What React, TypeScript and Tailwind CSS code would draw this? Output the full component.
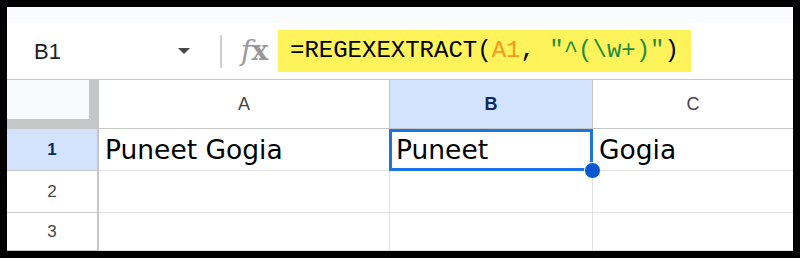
// Spreadsheet formula bar + grid snippet
const ui = "font-['Liberation_Sans',Arial,sans-serif]";
const cellFont = "font-['DejaVu_Sans',Verdana,sans-serif]";

function ColumnHeader({ label, width, active }: { label: string; width?: string; active?: boolean }) {
  return (
    <div
      className={`${width ?? 'flex-1'} border-b border-[#c4c7c5] flex items-center justify-center text-[18px] ${ui} ${
        active ? 'bg-[#d3e3fd] font-bold text-[#0b2a5e]' : 'bg-white text-[#444746]'
      } ${width ? 'border-r' : ''}`}
    >
      {label}
    </div>
  );
}

function RowHeader({ n, active }: { n: number; active?: boolean }) {
  return (
    <div
      className={`w-[92px] shrink-0 border-r-2 border-b border-[#c4c7c5] flex items-center justify-center text-[17px] ${ui} ${
        active ? 'bg-[#d3e3fd] font-bold text-[#0b2a5e]' : 'text-[#444746]'
      }`}
    >
      {n}
    </div>
  );
}

function Row({ n, height, cells, active }: { n: number; height: string; cells: string[]; active?: boolean }) {
  return (
    <div className={`flex ${height}`}>
      <RowHeader n={n} active={active} />
      <div className={`w-[291px] shrink-0 border-r border-b border-[#e1e1e1] flex items-center pl-[6px] text-[26.5px] text-black ${cellFont}`}>
        {cells[0]}
      </div>
      <div className={`relative w-[203px] shrink-0 border-r border-b border-[#e1e1e1] flex items-center pl-[6px] text-[26.5px] text-black ${cellFont}`}>
        {cells[1]}
        {active && (
          <>
            <div className="absolute -left-[1px] top-0 w-[204px] h-[42px] border-[3px] border-[#1a73e8]" />
            <div className="absolute left-[194px] top-[33px] w-[17px] h-[17px] rounded-full bg-[#0b57d0] border border-white z-10" />
          </>
        )}
      </div>
      <div className={`flex-1 border-b border-[#e1e1e1] flex items-center pl-[6px] text-[26.5px] text-black ${cellFont}`}>
        {cells[2]}
      </div>
    </div>
  );
}

export default function App() {
  return (
    <div className="w-[800px] h-[258px] bg-black p-[7px]">
      <div className="w-full h-full bg-white flex flex-col overflow-hidden">
        <div className="h-[16px] bg-[#f9fbfd]" />

        {/* Formula bar */}
        <div className="h-[57px] shrink-0 border-b border-[#c4c7c5] flex items-center">
          <div className="w-[206px] pl-[27px] pr-[23px] flex items-center justify-between">
            <span className={`text-[22px] text-[#1f1f1f] ${ui}`}>B1</span>
            <svg width="12" height="6" viewBox="0 0 12 6">
              <path d="M0 0 L12 0 L6 6 Z" fill="#444746" />
            </svg>
          </div>
          <div className="ml-[7px] w-[2px] h-[33px] bg-[#d0d0d0]" />
          <div className="ml-[19px] w-[37px] h-[42px] flex items-center">
            <span className="text-[28px] font-bold text-[#999999] font-['DejaVu_Serif',serif] leading-none">
              <span className="italic font-normal">f</span>x
            </span>
          </div>
          <div className="h-[42px] bg-[#fff35c] px-[12px] flex items-center text-[24px] text-black font-['Liberation_Mono',monospace] whitespace-pre">
            <span>=REGEXEXTRACT(</span>
            <span className="text-[#f4991a]">A1</span>
            <span>, </span>
            <span className="text-[#1e8e3e]">"^(\w+)"</span>
            <span>)</span>
          </div>
        </div>

        {/* Column headers */}
        <div className="flex h-[49px] shrink-0">
          <div className="w-[92px] shrink-0 bg-[#c4c7c5]">
            <div className="w-[82px] h-[39px] bg-[#f8f9fa]" />
          </div>
          <ColumnHeader label="A" width="w-[291px] shrink-0" />
          <ColumnHeader label="B" width="w-[203px] shrink-0" active />
          <ColumnHeader label="C" />
        </div>

        <Row n={1} height="h-[42px]" cells={['Puneet Gogia', 'Puneet', 'Gogia']} active />
        <Row n={2} height="h-[42px]" cells={['', '', '']} />
        <Row n={3} height="h-[38px]" cells={['', '', '']} />
      </div>
    </div>
  );
}
